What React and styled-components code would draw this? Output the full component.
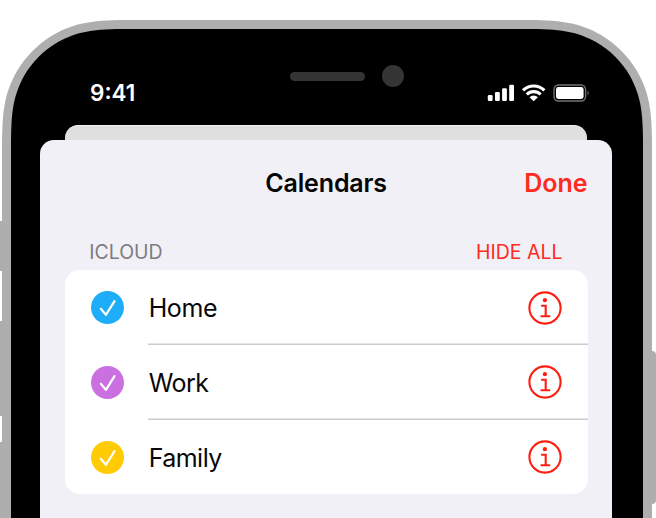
import React from "react";
import styled, { createGlobalStyle } from "styled-components";

const GlobalStyle = createGlobalStyle`
  * { box-sizing: border-box; }
  body {
    margin: 0;
    background: #fff;
    overflow: hidden;
    font-family: Inter, "Liberation Sans", sans-serif;
    -webkit-font-smoothing: antialiased;
  }
`;

const Stage = styled.main`
  position: relative;
  width: 656px;
  height: 518px;
  padding: 20px 4px 0 2px;
  overflow: hidden;
`;

const SideButton = styled.span`
  position: absolute;
  ${(p) => p.$side}: 0;
  top: ${(p) => p.$top}px;
  width: ${(p) => (p.$side === "left" ? 3 : 5)}px;
  height: ${(p) => p.$height}px;
  border-radius: ${(p) => (p.$side === "left" ? "0" : "0 4px 4px 0")};
  background: #aeaeae;
`;

const Chassis = styled.div`
  position: relative;
  height: 498px;
  padding: 9px 9px 0;
  background: #aeaeae;
  clip-path: path("M0 498V130C0 92 2 74 15 51C24 36 36 24 51 15C74 2 92 0 130 0H520C558 0 576 2 599 15C614 24 626 36 635 51C648 74 650 92 650 130V498Z");
`;

const Screen = styled.div`
  display: flex;
  flex-direction: column;
  height: 489px;
  padding: 0 31px 0 29px;
  background: #000;
  clip-path: path("M0 489V118C0 82 2 68 13 47C21 33 33 21 47 13C68 2 82 0 118 0H514C550 0 564 2 585 13C599 21 611 33 619 47C630 68 632 82 632 118V489Z");
`;

const StatusBar = styled.header`
  display: grid;
  grid-template-columns: 200px 114px 1fr;
  height: 96px;
  padding: 0 22px 0 50px;
`;

const Time = styled.time`
  padding-top: 50px;
  color: #fff;
  font-size: 22.5px;
  font-weight: 600;
  line-height: 28px;
`;

const Sensors = styled.div`
  display: flex;
  align-items: center;
  justify-content: space-between;
  height: 22px;
  margin-top: 36px;
`;

const Speaker = styled.span`
  width: 75px;
  height: 9px;
  border-radius: 5px;
  background: #353535;
`;

const Camera = styled.span`
  width: 22px;
  height: 22px;
  border-radius: 50%;
  background: #353535;
`;

const StatusIcons = styled.div`
  display: flex;
  justify-content: flex-end;
  padding-top: 54px;
`;

const BackSheet = styled.div`
  flex: none;
  height: 15.4px;
  margin: 0 24.6px 0 24.8px;
  border-top: 1px solid #f2f2f2;
  border-radius: 13px 13px 0 0;
  background: #dfdfdf;
`;

const Sheet = styled.section`
  flex: 1;
  padding: 0 24.5px 0 24.7px;
  border-radius: 14px 14px 0 0;
  background: #f1f0f6;
`;

const TitleBar = styled.div`
  display: grid;
  grid-template-columns: 1fr auto 1fr;
  align-items: center;
  height: 86px;
`;

const Title = styled.h1`
  grid-column: 2;
  margin: 0;
  color: #050505;
  font-size: 25px;
  font-weight: 600;
  line-height: 30px;
  letter-spacing: -0.15px;
`;

const DoneButton = styled.button`
  justify-self: end;
  padding: 0;
  border: 0;
  background: none;
  color: #ff2b20;
  font: 600 25px/30px Inter, sans-serif;
`;

const GroupHeader = styled.div`
  display: flex;
  align-items: center;
  justify-content: space-between;
  height: 44px;
  padding: 8px 25px 0 24.5px;
  color: #7d7c82;
  font-size: 19.5px;
  line-height: 26px;
`;

const HideAll = styled.button`
  padding: 0;
  border: 0;
  background: none;
  color: #ff2b20;
  font: inherit;
`;

const List = styled.ul`
  height: 224px;
  margin: 0;
  padding: 0;
  border-radius: 15px;
  background: #fff;
  list-style: none;
`;

const Row = styled.li`
  display: flex;
  height: 74.7px;
  padding-left: 26px;
`;

const CheckIcon = styled.svg`
  flex: none;
  align-self: center;
  width: 33px;
  height: 33px;
  margin-right: 24.5px;
`;

const RowBody = styled.div`
  flex: 1;
  display: flex;
  align-items: center;
  justify-content: space-between;
  padding-right: 25.6px;
  box-shadow: ${(p) => (p.$last ? "none" : "inset 0 -1.4px #cbcbcb")};
`;

const CalendarName = styled.span`
  padding: 0.8px 0 0 0.5px;
  color: #080808;
  font-size: 25px;
  line-height: 32px;
  letter-spacing: ${(p) => p.$tracking}px;
`;

const InfoIcon = styled.svg`
  width: 34px;
  height: 34px;
`;

const calendars = [
  { name: "Home", color: "#1eadf8", tracking: -0.4 },
  { name: "Work", color: "#ca70e0", tracking: -0.5 },
  { name: "Family", color: "#ffcb05", tracking: -0.55 },
];

function StatusGlyphs() {
  return (
    <svg width="103" height="20" viewBox="487 83 103 20" aria-hidden="true">
      <g fill="#fff">
        <rect x="487.8" y="95" width="4.8" height="6" rx="1.2" />
        <rect x="495" y="92" width="4.8" height="9" rx="1.2" />
        <rect x="502.1" y="88.2" width="4.8" height="12.8" rx="1.2" />
        <rect x="509.2" y="84.8" width="4.8" height="16.2" rx="1.2" />
        <path d="M533.7 101.3l-4.2-4a6 6 0 0 1 8.4 0z" />
        <rect x="556" y="87" width="27.6" height="12" rx="2.4" />
      </g>
      <g fill="none" stroke="#fff" strokeWidth="3.1">
        <path d="M523 90.4A15.2 15.2 0 0 1 544.4 90.4" />
        <path d="M526.8 94.5A9.8 9.8 0 0 1 540.6 94.5" />
      </g>
      <rect x="554" y="85" width="31.6" height="16" rx="4.5" fill="none" stroke="#737373" strokeWidth="1.4" />
      <path d="M587.6 90.4q2.4 2.6 0 5.2z" fill="#737373" />
    </svg>
  );
}

function Check({ color }) {
  return (
    <CheckIcon viewBox="0 0 33 33" aria-hidden="true">
      <circle cx="16.5" cy="16.5" r="16.5" fill={color} />
      <path d="M9.8 17.8L14.9 23.8L23.5 10.2" fill="none" stroke="#fff" strokeWidth="2.2" strokeLinecap="round" strokeLinejoin="round" />
    </CheckIcon>
  );
}

function Info() {
  return (
    <InfoIcon viewBox="0 0 34 34" aria-hidden="true">
      <circle cx="17" cy="17" r="15.6" fill="none" stroke="#ff1d12" strokeWidth="2.1" />
      <circle cx="16.9" cy="9.2" r="2.1" fill="#ff1d12" />
      <path d="M13.9 14.8H17.7V25M13.4 25.2H21.4" fill="none" stroke="#ff1d12" strokeWidth="2.1" strokeLinecap="round" />
    </InfoIcon>
  );
}

export default function App() {
  return (
    <>
      <GlobalStyle />
      <Stage>
        <SideButton $side="left" $top={221} $height={50} />
        <SideButton $side="left" $top={321} $height={95} />
        <SideButton $side="left" $top={442} $height={90} />
        <SideButton $side="right" $top={351} $height={153} />
        <Chassis>
          <Screen>
            <StatusBar>
              <Time>9:41</Time>
              <Sensors>
                <Speaker />
                <Camera />
              </Sensors>
              <StatusIcons>
                <StatusGlyphs />
              </StatusIcons>
            </StatusBar>
            <BackSheet />
            <Sheet>
              <TitleBar>
                <Title>Calendars</Title>
                <DoneButton>Done</DoneButton>
              </TitleBar>
              <GroupHeader>
                <span>ICLOUD</span>
                <HideAll>HIDE ALL</HideAll>
              </GroupHeader>
              <List>
                {calendars.map((c, i) => (
                  <Row key={c.name}>
                    <Check color={c.color} />
                    <RowBody $last={i === calendars.length - 1}>
                      <CalendarName $tracking={c.tracking}>{c.name}</CalendarName>
                      <Info />
                    </RowBody>
                  </Row>
                ))}
              </List>
            </Sheet>
          </Screen>
        </Chassis>
      </Stage>
    </>
  );
}
